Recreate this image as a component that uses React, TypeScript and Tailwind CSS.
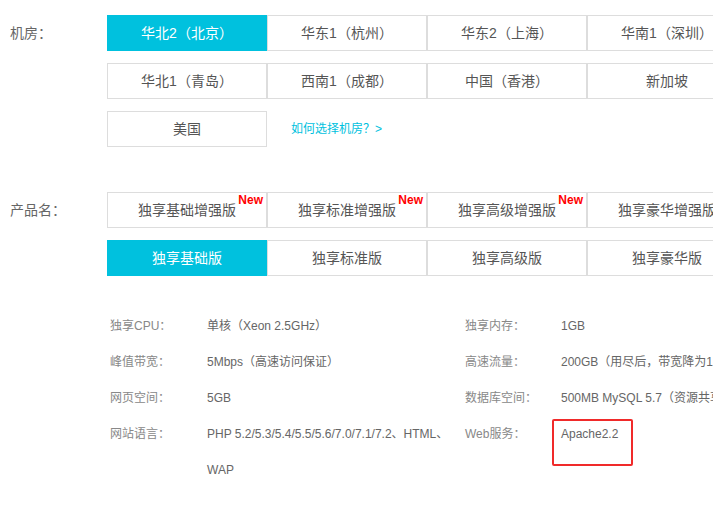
import React from 'react'

const regions = [
  ['华北2（北京）', '华东1（杭州）', '华东2（上海）', '华南1（深圳）'],
  ['华北1（青岛）', '西南1（成都）', '中国（香港）', '新加坡'],
]

const productsPlus = ['独享基础增强版', '独享标准增强版', '独享高级增强版', '独享豪华增强版']
const products = ['独享基础版', '独享标准版', '独享高级版', '独享豪华版']

function OptionButton({
  label,
  active = false,
  isNew = false,
}: {
  label: string
  active?: boolean
  isNew?: boolean
}) {
  return (
    <div
      className={`relative flex h-9 w-40 shrink-0 items-center justify-center whitespace-nowrap text-sm ${
        active ? 'bg-[#00c1de] text-white' : 'border border-[#dddddd] bg-white text-[#555555]'
      }`}
    >
      {label}
      {isNew && (
        <span className="absolute right-[3px] top-0 font-['Liberation_Sans',sans-serif] text-[12px] font-bold leading-[14px] text-[#ff0000]">
          New
        </span>
      )}
    </div>
  )
}

function Spec({ label, value, wide }: { label: string; value: React.ReactNode; wide?: boolean }) {
  return (
    <div className="flex">
      <div className={`${wide ? 'w-[96px]' : 'w-[97px]'} shrink-0 leading-9 text-[#888888]`}>{label}</div>
      <div className="leading-9 whitespace-nowrap text-[#666666]">{value}</div>
    </div>
  )
}

export default function App() {
  return (
    <div className="h-[507px] w-[713px] overflow-hidden bg-white font-['Liberation_Sans','Noto_Sans_CJK_SC',sans-serif]">
      <div className="flex pl-[10px] pt-[15px]">
        <div className="w-[97px] shrink-0 text-sm leading-9 text-[#666666]">机房：</div>
        <div className="flex flex-col gap-3">
          {regions.map((row, r) => (
            <div key={r} className="flex">
              {row.map((name, i) => (
                <OptionButton key={name} label={name} active={r === 0 && i === 0} />
              ))}
            </div>
          ))}
          <div className="flex items-center">
            <OptionButton label="美国" />
            <a className="ml-6 text-xs text-[#00c1de]">如何选择机房？&gt;</a>
          </div>
        </div>
      </div>

      <div className="mt-[45px] flex pl-[10px]">
        <div className="w-[97px] shrink-0 text-sm leading-9 text-[#666666]">产品名：</div>
        <div className="flex flex-col gap-3">
          <div className="flex">
            {productsPlus.map((name, i) => (
              <OptionButton key={name} label={name} isNew={i < 3} />
            ))}
          </div>
          <div className="flex">
            {products.map((name, i) => (
              <OptionButton key={name} label={name} active={i === 0} />
            ))}
          </div>
        </div>
      </div>

      <div className="mt-8 flex pl-[110px] text-xs">
        <div className="w-[355px] shrink-0">
          <Spec label="独享CPU：" value="单核（Xeon 2.5GHz）" />
          <Spec label="峰值带宽：" value="5Mbps（高速访问保证）" />
          <Spec label="网页空间：" value="5GB" />
          <Spec
            label="网站语言："
            value={
              <>
                PHP 5.2/5.3/5.4/5.5/5.6/7.0/7.1/7.2、HTML、
                <br />
                WAP
              </>
            }
          />
        </div>
        <div>
          <Spec wide label="独享内存：" value="1GB" />
          <Spec wide label="高速流量：" value="200GB（用尽后，带宽降为1Mbps）" />
          <Spec wide label="数据库空间：" value="500MB MySQL 5.7（资源共享型）" />
          <div className="flex">
            <div className="w-[96px] shrink-0 leading-9 text-[#888888]">Web服务：</div>
            <div className="relative leading-9 text-[#666666]">
              Apache2.2
              <span className="absolute left-[-9px] top-[3px] h-[47px] w-[81px] rounded-[2px] border-2 border-[#f02a2a]" />
            </div>
          </div>
        </div>
      </div>
    </div>
  )
}
